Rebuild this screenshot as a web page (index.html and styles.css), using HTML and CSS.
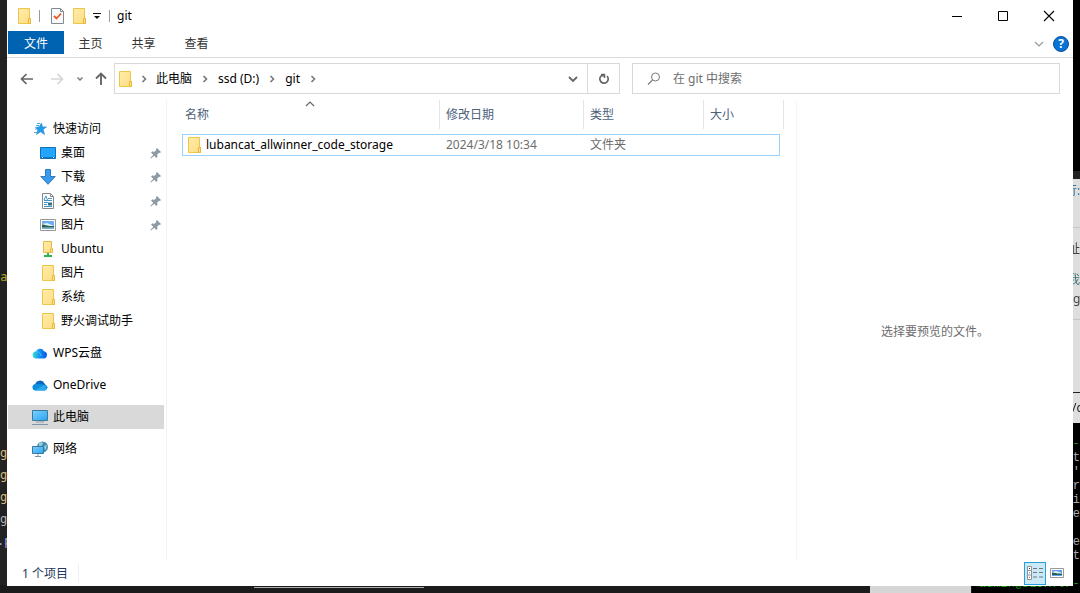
FILE: index.html
```html
<!DOCTYPE html>
<html lang="zh-CN">
<head>
<meta charset="utf-8">
<title>git</title>
<link rel="stylesheet" href="styles.css">
</head>
<body>
<svg class="defs" aria-hidden="true">
  <linearGradient id="yellow" x1="0" y1="0" x2="1" y2="1"><stop offset="0" stop-color="#ffedaa"/><stop offset="1" stop-color="#fedc82"/></linearGradient>
  <linearGradient id="blue" x1="0" y1="0" x2="1" y2="1"><stop offset="0" stop-color="#7fd0ff"/><stop offset="1" stop-color="#27a4f2"/></linearGradient>
  <linearGradient id="wps" x1="0" y1="0" x2="1" y2="0"><stop offset="0" stop-color="#36e0cf"/><stop offset=".5" stop-color="#168df5"/><stop offset="1" stop-color="#0758e8"/></linearGradient>
  <symbol id="folder" viewBox="0 0 16 16"><path d="M2.500.5h11v10h1v5h-12z" fill="url(#yellow)" stroke="#ecc64b"/><path d="M12.500 15V10.500h2v5h-2z" fill="#ffe18b" stroke="#e6b93c"/></symbol>
  <symbol id="pin" viewBox="0 0 12 12"><path d="M7 1l4 4-1 1-1-.3L7.300 7.400 7.400 10 6.300 10.900 4.200 8.700 1 11.600.4 11.500.4 11 3.300 7.800 1.100 5.700 2 4.600 4.600 4.700 6.300 3 6 2z" fill="#8c9ba6"/></symbol>
  <symbol id="chev" viewBox="0 0 6 8"><path d="M1.500 1L4.500 4 1.500 7" fill="none" stroke="#777" stroke-width="1.600"/></symbol>
  <symbol id="picture" viewBox="0 0 16 16"><path d="M.5 2.500h15v11H.5z" fill="#fff" stroke="#999"/><path d="M2 4h12v8H2z" fill="#6caef0"/><path d="M2 7l5-1 7 3v1H2z" fill="#e2f2fb"/><path d="M2 7.500c3 0 5 2 12 1.500v1.500H2z" fill="#28604b"/><path d="M2 10.500h12V12H2z" fill="#7cb0c4"/></symbol>
</svg>

<div class="backdrop" aria-hidden="true">
  <div class="editor">
    <span class="code code-a">ca</span>
    <span class="code code-b">g</span>
    <span class="code code-c">g</span>
    <span class="code code-d">g</span>
    <span class="code code-e">g</span>
    <span class="code code-f">.p</span>
  </div>
  <div class="below"><i class="below-line"></i><i class="below-paper"></i></div>
  <div class="page">
    <span class="note note-a">行:</span>
    <span class="note note-b">址</span>
    <span class="note note-c">我</span>
    <span class="note note-d">g</span>
    <span class="note note-e">/c</span>
  </div>
  <div class="terminal"><pre><b>admin@DESKTOP-G</b>
              tt
              '1
              ra
              in
              es
               1
              ed
              ta

<b>admin@DESKTOP-G</b></pre></div>
</div>

<main class="window">
  <header class="titlebar">
    <svg class="icon"><use href="#folder"/></svg>
    <i class="sep"></i>
    <button class="quick" aria-label="属性"><svg class="icon" viewBox="0 0 16 16"><path d="M2.500.5h9l3 3v12h-12z" fill="#f7f9fb" stroke="#828990"/><path d="M11.500.5v3h3" fill="none" stroke="#828990"/><path d="M5 8l2.500 2.500L12 5.500" fill="none" stroke="#ee5824" stroke-width="1.800"/></svg></button>
    <button class="quick" aria-label="新建文件夹"><svg class="icon"><use href="#folder"/></svg></button>
    <button class="quick custom" aria-label="自定义快速访问工具栏"><svg width="8" height="8" viewBox="0 0 8 8"><path d="M0 1.500h8" stroke="#111"/><path d="M1 4h6L4 7z" fill="#111"/></svg></button>
    <i class="sep"></i>
    <h1 class="title">git</h1>
    <button class="caption" aria-label="最小化"><svg width="12" height="12" viewBox="0 0 12 12"><path d="M1 6.500h10" stroke="#000"/></svg></button>
    <button class="caption" aria-label="最大化"><svg width="12" height="12" viewBox="0 0 12 12"><path d="M1.500 1.500h9v9h-9z" fill="none" stroke="#000"/></svg></button>
    <button class="caption" aria-label="关闭"><svg width="12" height="12" viewBox="0 0 12 12"><path d="M1 1l10 10M11 1L1 11" stroke="#000" stroke-width="1.100"/></svg></button>
  </header>

  <nav class="tabs">
    <button class="tab file">文件</button>
    <button class="tab">主页</button>
    <button class="tab">共享</button>
    <button class="tab">查看</button>
    <button class="expand" aria-label="展开功能区"><svg width="10" height="6" viewBox="0 0 10 6"><path d="M1 1l4 4 4-4" fill="none" stroke="#999" stroke-width="1.200"/></svg></button>
    <button class="help" aria-label="帮助">?</button>
  </nav>

  <div class="toolbar">
    <div class="moves">
      <button class="move" aria-label="后退"><svg width="14" height="12" viewBox="0 0 14 12"><path d="M6.500 1l-5 5 5 5M2 6h11" fill="none" stroke="#666" stroke-width="1.700"/></svg></button>
      <button class="move" aria-label="前进"><svg width="14" height="12" viewBox="0 0 14 12"><path d="M7.500 1l5 5-5 5M12 6H1" fill="none" stroke="#d6d6d6" stroke-width="1.700"/></svg></button>
      <button class="move recent" aria-label="最近浏览的位置"><svg width="8" height="6" viewBox="0 0 8 6"><path d="M1.500 1.500L4 4l2.500-2.500" fill="none" stroke="#777" stroke-width="1.500"/></svg></button>
      <button class="move up" aria-label="上移"><svg width="12" height="14" viewBox="0 0 12 14"><path d="M1 6.500l5-5 5 5M6 2v11" fill="none" stroke="#666" stroke-width="1.900"/></svg></button>
    </div>
    <div class="address">
      <svg class="icon"><use href="#folder"/></svg>
      <svg class="chev"><use href="#chev"/></svg>
      <button class="crumb">此电脑</button>
      <svg class="chev"><use href="#chev"/></svg>
      <button class="crumb">ssd (D:)</button>
      <svg class="chev"><use href="#chev"/></svg>
      <button class="crumb">git</button>
      <svg class="chev"><use href="#chev"/></svg>
      <button class="drop" aria-label="以前的位置"><svg width="10" height="8" viewBox="0 0 10 8"><path d="M1 2l4 4 4-4" fill="none" stroke="#666" stroke-width="1.800"/></svg></button>
      <button class="refresh" aria-label="刷新"><svg width="12" height="12" viewBox="0 0 12 12"><path d="M9 3a4.200 4.200 0 1 1-5.500-.4H6" fill="none" stroke="#666" stroke-width="1.700"/><path d="M3 1.500h3.500V5" fill="none" stroke="#666" stroke-width="1.500"/></svg></button>
    </div>
    <label class="search">
      <svg width="14" height="14" viewBox="0 0 14 14"><circle cx="8.500" cy="5" r="4" fill="none" stroke="#777"/><path d="M5.600 7.900L1 12.500" stroke="#777" stroke-width="1.200"/></svg>
      <input type="search" placeholder="在 git 中搜索" aria-label="在 git 中搜索">
    </label>
  </div>

  <div class="content">
    <nav class="tree">
      <a class="node" href="#"><svg class="icon" viewBox="0 0 16 16"><path d="M9.500 2l1 3.900h4l-3.300 2.600 1.300 5-4-2.700L4.500 13.500l1.400-4.600L3.500 6.500 7 5.900z" fill="#1e9cf0" stroke="#3487c6" stroke-width=".6"/><path d="M4 4.500h3M3 8h2M2 11.500h3M5 2.500h3" stroke="#4aa6dc"/></svg>快速访问</a>
      <a class="node sub" href="#"><svg class="icon" viewBox="0 0 16 16"><path d="M.5 2.500h15v11H.5z" fill="#22a5fc" stroke="#1072ba"/><path d="M1 12.500h14" stroke="#1073bb"/><path d="M2 12.500h1m10 0h1" stroke="#fff"/></svg>桌面<svg class="pin"><use href="#pin"/></svg></a>
      <a class="node sub" href="#"><svg class="icon" viewBox="0 0 16 16"><path d="M5.500.5h5v7h4.700L8 15.300.800 7.500h4.700z" fill="#3a9af0" stroke="#3179bb"/></svg>下载<svg class="pin"><use href="#pin"/></svg></a>
      <a class="node sub" href="#"><svg class="icon" viewBox="0 0 16 16"><path d="M2.500.5h8l3 3v12h-11z" fill="#fff" stroke="#888"/><path d="M10.500.5v3h3" fill="none" stroke="#888"/><path d="M4 7l1.800-4L7.500 7M8 5.500h4M4 7.500h8M4 9.500h4M4 11.500h3M4 13.500h8" fill="none" stroke="#4294c7"/><path d="M8 9.500h4v3H8z" fill="#376f83"/></svg>文档<svg class="pin"><use href="#pin"/></svg></a>
      <a class="node sub" href="#"><svg class="icon"><use href="#picture"/></svg>图片<svg class="pin"><use href="#pin"/></svg></a>
      <a class="node sub" href="#"><svg class="icon" viewBox="0 0 16 16"><path d="M3.500.5h8v7h1v4h-9z" fill="url(#yellow)" stroke="#e5bd45"/><path d="M10.500 11V7.500" stroke="#e5bd45"/><path d="M8 12v3M4 15h8" stroke="#31b54a" stroke-width="2"/></svg>Ubuntu</a>
      <a class="node sub" href="#"><svg class="icon"><use href="#folder"/></svg>图片</a>
      <a class="node sub" href="#"><svg class="icon"><use href="#folder"/></svg>系统</a>
      <a class="node sub" href="#"><svg class="icon"><use href="#folder"/></svg>野火调试助手</a>
      <a class="node root" href="#"><svg class="icon" viewBox="0 0 16 16"><path d="M4.500 13.500a3.500 3.500 0 0 1-.7-7A4.600 4.600 0 0 1 12 6.200a3.700 3.700 0 0 1-.3 7.300z" fill="url(#wps)"/><path d="M4 7a4 4 0 0 1 5 4" fill="none" stroke="#38c9f1"/></svg>WPS云盘</a>
      <a class="node root" href="#"><svg class="icon" viewBox="0 0 16 16"><path d="M3 8a5 5 0 0 1 9.500-1.500L16 11H1z" fill="#0868bd"/><path d="M3.500 13.500A3.300 3.300 0 0 1 3 7l3-.3 7 1A3 3 0 0 1 13 13.500z" fill="#108ddf"/><path d="M3 13.500L11.500 8a3 3 0 0 1 1.500 5.500z" fill="#28aaea"/></svg>OneDrive</a>
      <a class="node root selected" href="#" aria-current="page"><svg class="icon" viewBox="0 0 16 16"><path d="M.5 1.500h15v10H.5z" fill="url(#blue)" stroke="#397b9d"/><path d="M4 13h8" stroke="#8a9caa"/><path d="M0 15.500h16" stroke="#8196aa"/></svg>此电脑</a>
      <a class="node root" href="#"><svg class="icon" viewBox="0 0 16 16"><circle cx="10.500" cy="6" r="5.500" fill="#438fb3"/><path d="M7 2l3-1 1 2-2 2H7zM12 5l3-1-1 4-1 1z" fill="#9acde0"/><path d="M.5 5.500h11v7H.5z" fill="url(#blue)" stroke="#397b9d"/><path d="M6 13v2M3 15.500h6" stroke="#7895aa"/></svg>网络</a>
    </nav>

    <section class="files">
      <table class="list">
        <thead><tr class="row"><th class="name">名称<svg class="sort" width="10" height="6" viewBox="0 0 10 6"><path d="M1 5l4-4 4 4" fill="none" stroke="#666" stroke-width="1.200"/></svg></th><th class="date">修改日期</th><th class="type">类型</th><th class="size">大小</th></tr></thead>
        <tbody><tr class="row item"><td class="name"><svg class="icon"><use href="#folder"/></svg>lubancat_allwinner_code_storage</td><td class="date">2024/3/18 10:34</td><td class="type">文件夹</td><td class="size"></td></tr></tbody>
      </table>
    </section>
    <aside class="preview">选择要预览的文件。</aside>
  </div>

  <footer class="status">
    <span class="count">1 个项目</span>
    <button class="view on" aria-label="详细信息"><svg width="16" height="14" viewBox="0 0 16 14"><path d="M.5.5h4v13h-4zM.5 4.500h4M.5 9h4" fill="#fff" stroke="#929292"/><path d="M6 2.500h4m2 0h4M6 6.500h4m2 0h4M6 11h4m2 0h4" stroke="#70777c"/><path d="M2 2.500h1" stroke="#333"/><path d="M2 6.800h1" stroke="#268cff"/><path d="M2 11.300h1" stroke="#d33"/></svg></button>
    <button class="view" aria-label="大缩略图"><svg width="14" height="12" viewBox="0 0 14 12"><path d="M.5 1.500h13v9H.5z" fill="#fff" stroke="#999"/><path d="M2 3h10v6H2z" fill="#5f9ff0"/><path d="M2 5l4-1 6 2v1H2z" fill="#e2f2fb"/><path d="M2 5.500c3 0 5 1.500 10 1V8H2z" fill="#28604b"/></svg></button>
  </footer>
</main>
</body>
</html>
```

FILE: styles.css
```css
* { box-sizing: border-box; }
body {
  margin: 0;
  height: 100vh;
  padding: 0 7px 7px;
  display: flex;
  overflow: hidden;
  background: #1e1e1e;
  font: 12px/16px "Noto Sans", "Noto Sans CJK SC", sans-serif;
  color: #000;
}
button { border: 0; padding: 0; margin: 0; background: none; font: inherit; color: inherit; display: flex; align-items: center; justify-content: center; }
svg { flex: none; display: block; }
.defs { position: absolute; width: 0; height: 0; }
.icon { width: 16px; height: 16px; }

.backdrop { position: fixed; inset: 0; overflow: hidden; }
.editor { position: absolute; inset: 0 auto 0 0; width: 7px; overflow: hidden; background: #222; font: 12px/16px "DejaVu Sans Mono", monospace; color: #d7ba7d; }
.code { position: absolute; left: 0; }
.code-a { top: 269px; left: -7px; color: #b5a52c; }
.code-b { top: 445px; }
.code-c { top: 467px; }
.code-d { top: 489px; }
.code-e { top: 511px; color: #b4b4b4; }
.code-f { top: 533px; left: -3px; color: #aaa6e8; }
.below { position: absolute; left: 0; right: 0; bottom: 0; height: 8px; background: #1b1b1b; }
.below-line { position: absolute; left: 254px; top: 2px; width: 170px; height: 1px; background: #aaa; }
.below-paper { position: absolute; left: 870px; top: 0; width: 101px; height: 8px; background: #d6d6d6; }
.page { position: absolute; top: 0; right: 0; width: 8px; height: 423px; overflow: hidden; background: linear-gradient(#000 171px, #222 171px 179px, #dedede 179px 227px, #c5c5c5 227px 228px, #dedede 228px 319px, #c5c5c5 319px 320px, #dedede 320px 392px, #222 392px 393px, #dedede 393px); }
.note { position: absolute; left: -4px; color: #444; white-space: nowrap; }
.note-a { top: 183px; left: -7px; color: #367098; }
.note-b { top: 241px; }
.note-c { top: 272px; color: #397575; }
.note-d { top: 291px; left: 1px; }
.note-e { top: 400px; left: 0; color: #222; }
.terminal { position: absolute; left: 972px; right: 0; top: 423px; bottom: 0; background: #000; overflow: hidden; }
.terminal pre { margin: 14px 0 0; font: 12px/14px "Liberation Mono", monospace; color: #aaa; }
.terminal b { margin-left: 7px; font-weight: 400; color: #13a10e; }

.window { position: relative; flex: 1; min-width: 0; display: flex; flex-direction: column; background: #fff; }
.titlebar { height: 31px; display: flex; align-items: center; padding: 0 1px 0 9px; }
.sep { width: 1px; height: 12px; background: #999; margin: 0 9px 0 7px; }
.quick { margin-right: 6px; }
.custom { margin-right: 1px; }
.custom + .sep { margin-right: 7px; }
.title { flex: 1; margin: 0; font: inherit; }
.caption { width: 46px; height: 31px; }

.tabs { display: flex; align-items: flex-start; height: 27px; padding: 0 4px 0 1px; border-bottom: 1px solid #dadbdc; color: #333; }
.tab { width: 53px; height: 23px; padding-top: 2px; }
.file { width: 56px; background: #0063b1; color: #fff; }
.expand { width: 20px; height: 26px; margin-left: auto; }
.help { width: 16px; height: 16px; margin: 5px 0 0 4px; border: 1px solid #0b5298; border-radius: 50%; background: #0873d6; color: #fff; font-weight: 700; }

.toolbar { display: flex; padding: 5px 13px 6px 5px; }
.moves { display: flex; width: 102px; }
.move { width: 30px; }
.recent { width: 16px; }
.up { width: 25px; }
.address, .search { height: 31px; min-width: 0; display: flex; align-items: center; border: 1px solid #d9d9d9; }
.address { flex: 1 1 506px; padding-left: 2px; }
.search { flex: 1 1 428px; margin-left: 12px; padding-left: 14px; gap: 12px; }
.chev { width: 6px; height: 8px; margin: 0 9px 0 8px; }
.crumb + .chev { margin-left: 10px; }
.crumb + .chev + .crumb { margin-left: 1px; }
.search input { flex: 1; min-width: 0; border: 0; padding: 0; outline: 0; background: none; font: inherit; }
.search input::placeholder { color: #6d6d6d; opacity: 1; }
.drop { width: 29px; height: 29px; margin-left: auto; }
.refresh { width: 32px; height: 29px; border-left: 1px solid #d9d9d9; }

.content { flex: 1; min-height: 0; display: flex; }
.tree { width: 160px; padding: 17px 2px 0 1px; border-right: 1px solid #f2f2f2; overflow: hidden; }
.node { height: 24px; display: flex; align-items: center; gap: 5px; padding-left: 24px; color: #000; text-decoration: none; white-space: nowrap; }
.sub { padding-left: 32px; }
.root { margin-top: 8px; }
.selected { background: #d9d9d9; }
.pin { width: 12px; height: 12px; margin: 0 2px 0 auto; }

.files { flex: 1; min-width: 0; padding-left: 15px; overflow: hidden; }
.list, .list thead, .list tbody { display: block; }
.row { display: flex; }
.row th, .row td { flex: none; display: flex; align-items: center; padding: 0 0 0 6px; font-weight: 400; white-space: nowrap; }
.name { width: 258px; position: relative; }
.date { width: 144px; }
.type { width: 120px; }
.size { width: 80px; }
.row th { height: 29px; border-right: 1px solid #e5e5e5; color: #4c607a; }
.row th.name { padding-left: 3px; }
.sort { position: absolute; top: 1px; left: 50%; margin-left: -6px; }
.item { width: 598px; height: 22px; margin-top: 5px; border: 1px solid #99d1ff; color: #6d6d6d; }
.item td.date, .item td.type { padding-left: 5px; }
.item td.name { padding-left: 3px; gap: 4px; color: #000; }
.item td.size { flex: 1; width: auto; }
.preview { width: 277px; display: flex; align-items: center; justify-content: center; padding-top: 4px; border-left: 1px solid #f5f5f5; color: #6d6d6d; }

.status { height: 26px; display: flex; align-items: center; padding: 0 5px 0 15px; color: #1e395b; }
.count { margin-right: auto; padding: 2px 10px 0 0; border-right: 1px solid #f0f0f0; }
.view { width: 22px; height: 23px; }
.on { border: 1px solid #26a0da; background: #cbe8f6; }
```
